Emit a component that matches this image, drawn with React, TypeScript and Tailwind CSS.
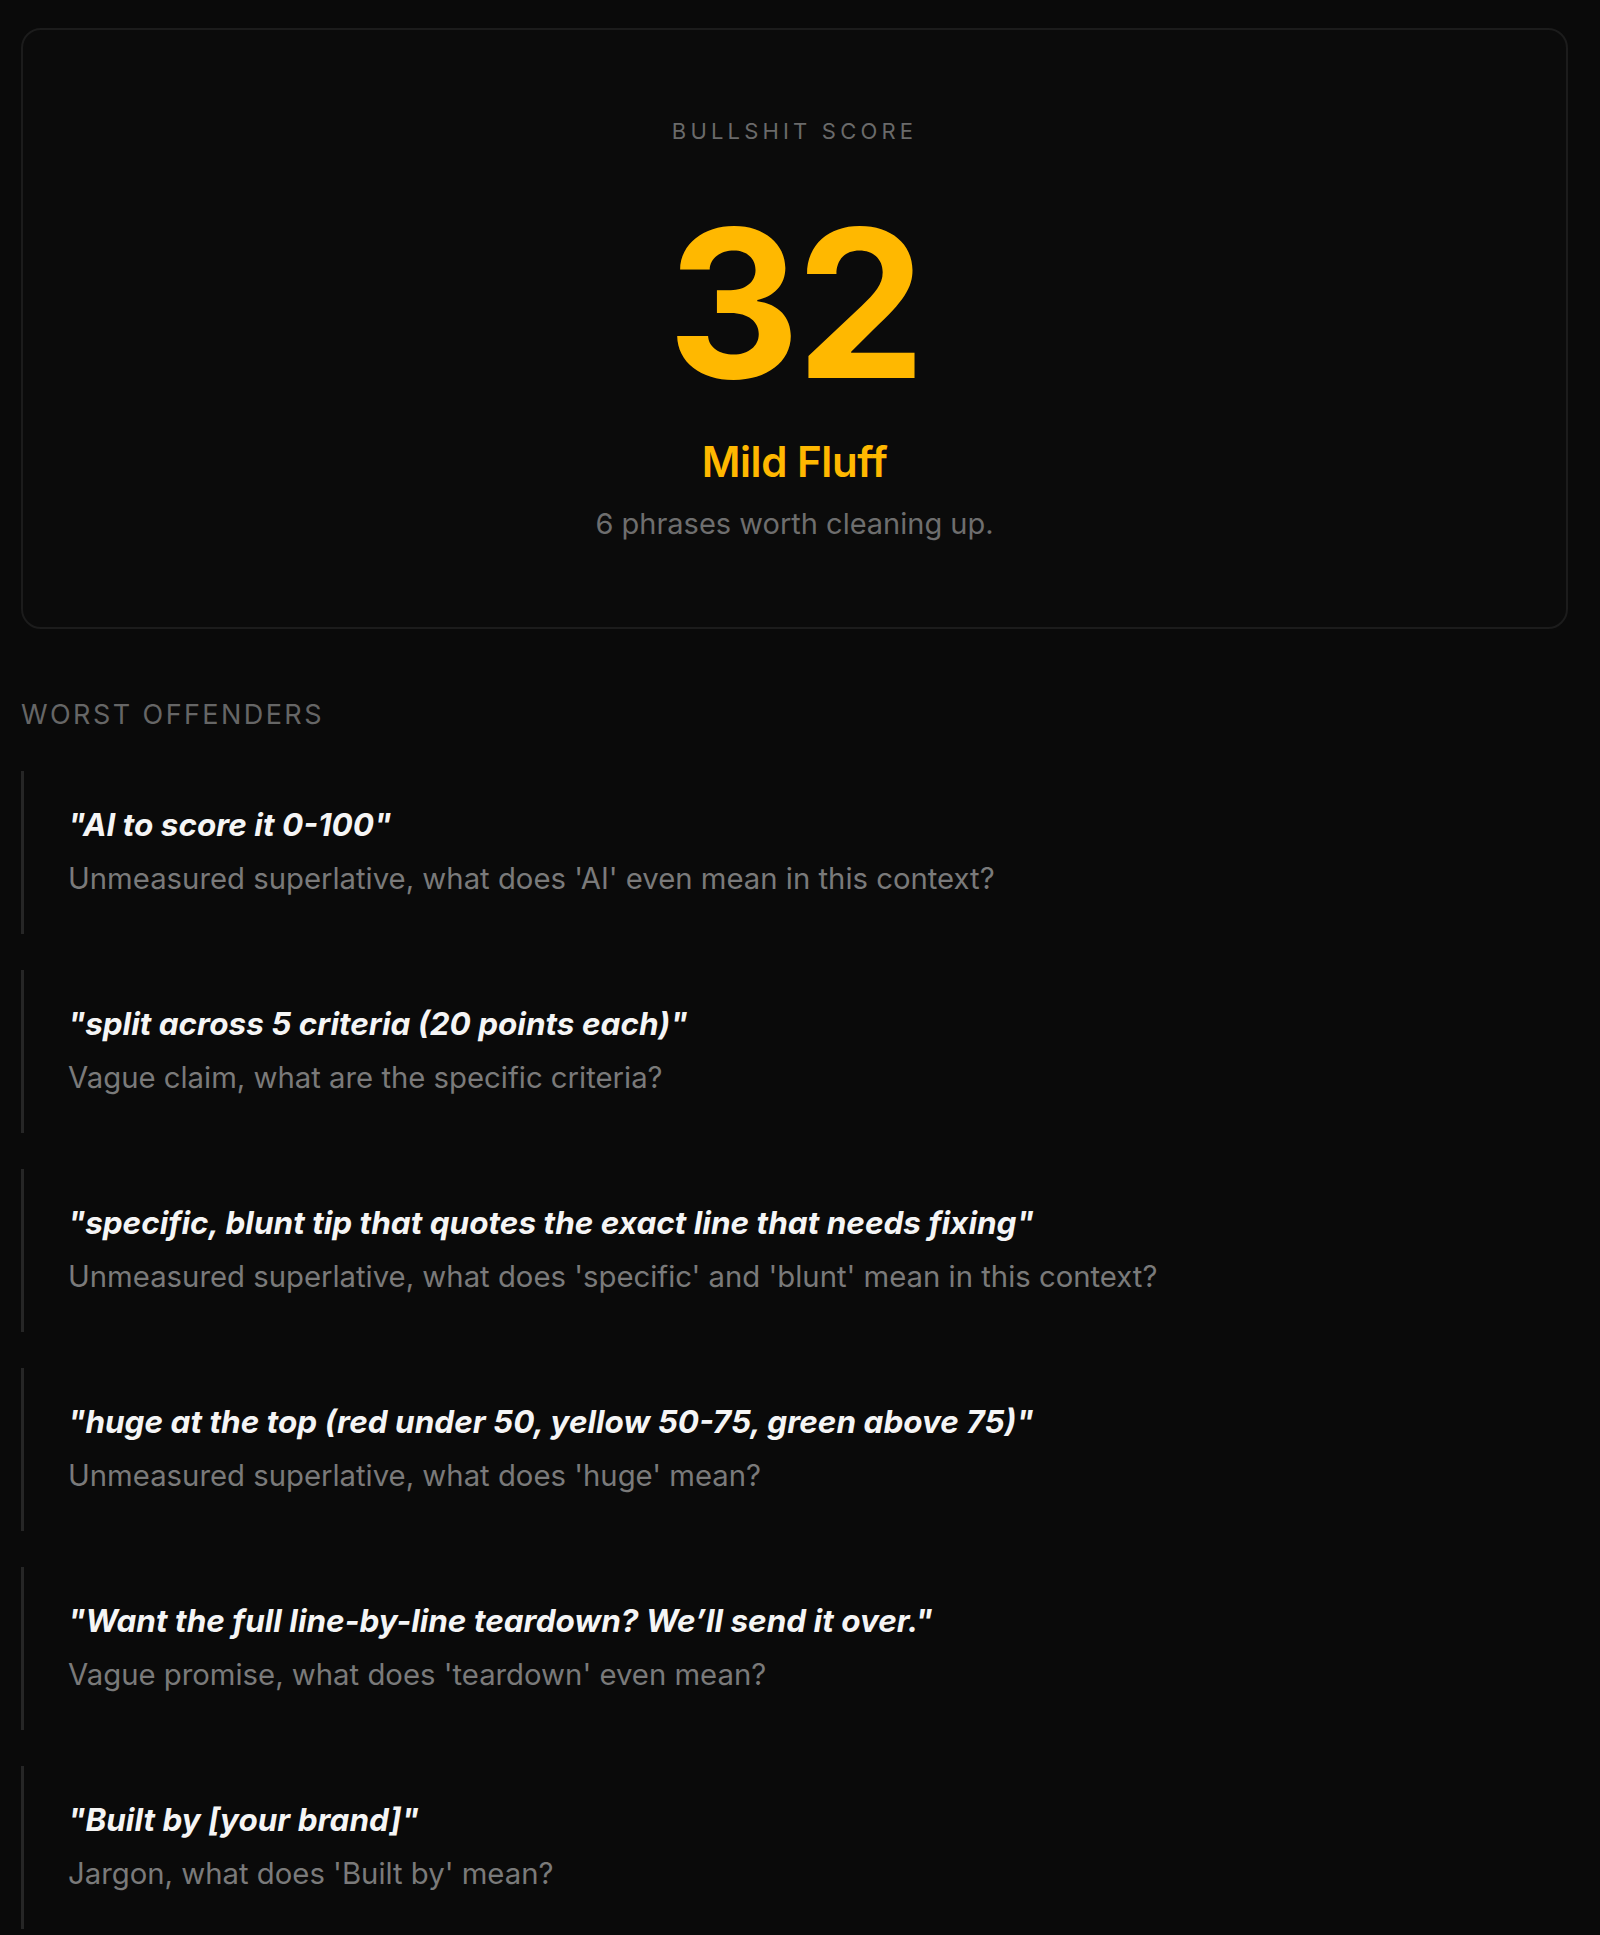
import React from 'react'

const offenders = [
  { quote: '"AI to score it 0-100"', note: "Unmeasured superlative, what does 'AI' even mean in this context?" },
  { quote: '"split across 5 criteria (20 points each)"', note: 'Vague claim, what are the specific criteria?' },
  { quote: '"specific, blunt tip that quotes the exact line that needs fixing"', note: "Unmeasured superlative, what does 'specific' and 'blunt' mean in this context?" },
  { quote: '"huge at the top (red under 50, yellow 50-75, green above 75)"', note: "Unmeasured superlative, what does 'huge' mean?" },
  { quote: '"Want the full line-by-line teardown? We\u2019ll send it over."', note: "Vague promise, what does 'teardown' even mean?" },
  { quote: '"Built by [your brand]"', note: "Jargon, what does 'Built by' mean?" },
]

const App = () => {
  return (
    <div className="min-h-screen bg-[#0a0a0a] pl-[21px] pr-[32px] pt-[28px] font-['Inter','Liberation_Sans',sans-serif]">
      <section className="flex flex-col items-center rounded-[20px] border-2 border-[#1c1c1c] bg-[#0b0b0b] pt-[90px] pb-[89px]">
        <p className="text-[22px] leading-none tracking-[0.19em] text-[#6a6a6a]">BULLSHIT SCORE</p>
        <p className="mt-[58px] text-[206px] leading-none font-bold tracking-[-0.02em] text-[#ffb800]">32</p>
        <h2 className="mt-[35px] text-[42px] leading-none font-semibold tracking-[-0.01em] text-[#ffb800]">Mild Fluff</h2>
        <p className="mt-[26px] text-[29px] leading-none text-[#6e6e6e]">6 phrases worth cleaning up.</p>
      </section>

      <h3 className="mt-[72px] text-[27px] leading-none tracking-[0.09em] text-[#666666]">WORST OFFENDERS</h3>

      <div className="mt-[43px] flex flex-col gap-[36px]">
        {offenders.map((o) => (
          <div key={o.quote} className="border-l-[3px] border-[#262626] pl-[44px] pt-[34px] pb-[35px]">
            <p className="text-[31.5px] leading-[40px] font-bold italic text-[#f5f5f5]">{o.quote}</p>
            <p className="mt-[14px] text-[29.3px] leading-[40px] text-[#7a7a7a]">{o.note}</p>
          </div>
        ))}
      </div>
    </div>
  )
}

export default App
